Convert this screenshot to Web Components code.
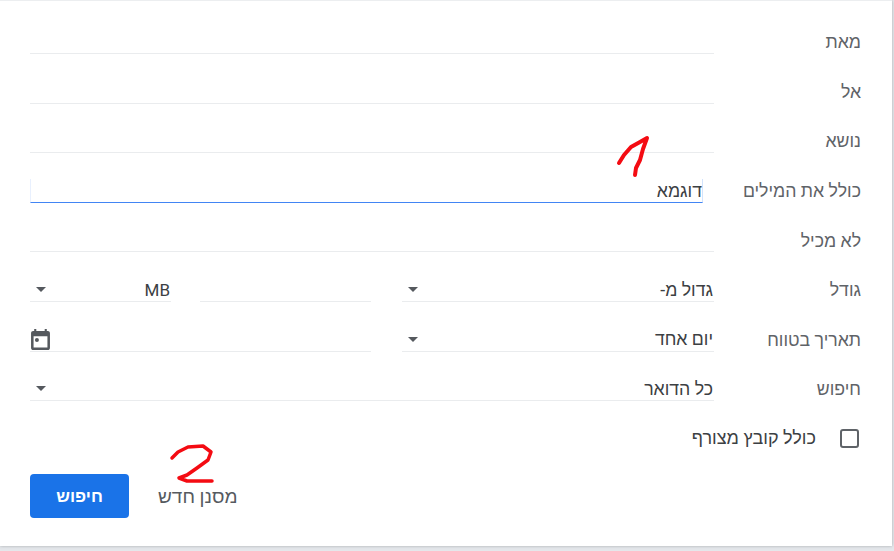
<!DOCTYPE html>
<html lang="he" dir="rtl">
<head>
<meta charset="utf-8">
<title>חיפוש</title>
<style>
    html, body { margin: 0; padding: 0; height: 100%; overflow: hidden; }
    body {
        background: #e4e7eb;
        font-family: Roboto, "Liberation Sans", Arial, sans-serif;
        color: #3c4043;
    }
</style>
</head>
<body>
<search-panel>
    <filter-row label="מאת"><text-line></text-line></filter-row>
    <filter-row label="אל"><text-line></text-line></filter-row>
    <filter-row label="נושא"><text-line></text-line></filter-row>
    <filter-row label="כולל את המילים"><text-line focused value="דוגמא"></text-line></filter-row>
    <filter-row label="לא מכיל"><text-line></text-line></filter-row>
    <filter-row label="גודל">
        <select-line style="flex:none;width:312px" value="גדול מ-"></select-line>
        <text-line style="flex:none;width:171px"></text-line>
        <select-line style="flex:none;width:141px;margin-right:-2px;font-size:17px" value="MB"></select-line>
    </filter-row>
    <filter-row label="תאריך בטווח">
        <select-line style="flex:none;width:312px" value="יום אחד"></select-line>
        <text-line style="flex:none;width:341px" calendar></text-line>
    </filter-row>
    <filter-row label="חיפוש"><select-line value="כל הדואר"></select-line></filter-row>
    <check-row>כולל קובץ מצורף</check-row>
    <action-bar></action-bar>
    <red-scribbles></red-scribbles>
</search-panel>

<script>
class SearchPanel extends HTMLElement {
    constructor() {
        super();
        this.attachShadow({mode: 'open'}).innerHTML = `
        <style>
            :host {
                display: block;
                position: relative;
                box-sizing: border-box;
                width: 892px;
                height: 546px;
                margin-right: 2px;
                padding: 3.5px 31px 0 30px;
                background: #fff;
                border-top: 1px solid #eceef0;
                box-shadow: 0 0 3px rgba(60,64,67,.35);
            }
        </style>
        <slot></slot>`;
    }
}

class FilterRow extends HTMLElement {
    constructor() {
        super();
        this.attachShadow({mode: 'open'}).innerHTML = `
        <style>
            :host {
                display: flex;
                height: 49.6px;
                align-items: flex-end;
            }
            .label {
                flex: 0 0 147px;
                align-self: center;
                margin-top: 26px;
                font-size: 17.7px;
                line-height: 20px;
                color: #5f6368;
                white-space: nowrap;
            }
            .fields {
                flex: 1;
                height: 100%;
                display: flex;
                gap: 31px;
                align-items: flex-end;
            }
        </style>
        <div class="label"></div>
        <div class="fields"><slot></slot></div>`;
        this.shadowRoot.querySelector('.label').textContent = this.getAttribute('label');
    }
}

class TextLine extends HTMLElement {
    constructor() {
        super();
        const icon = this.hasAttribute('calendar') ? `
            <svg viewBox="3 2 18 20" width="19" height="21">
                <path fill="#55595e" d="M19 4h-1V2h-2v2H8V2H6v2H5c-1.1 0-2 .9-2 2v14c0 1.1.9 2 2 2h14c1.1 0 2-.9 2-2V6c0-1.1-.9-2-2-2zm-.4 15.6H5.4V9h13.2v10.6z"/>
                <circle fill="#55595e" cx="8.6" cy="12.4" r="1.9"/>
            </svg>` : '';
        this.attachShadow({mode: 'open'}).innerHTML = `
        <style>
            :host {
                display: flex;
                flex: 1;
                box-sizing: border-box;
                height: 24px;
                align-items: flex-end;
                border-bottom: 1px solid #eaecee;
                font-size: 17.7px;
                color: #3c4043;
            }
            :host([focused]) {
                margin-right: 11px;
                border-bottom-color: #4285f4;
                border-left: 1px solid #e8f0fe;
                border-right: 1px solid #d2e3fc;
            }
            :host([calendar]) { justify-content: space-between; height: 28px; }
            span { line-height: 22px; }
            svg { display: block; margin-left: 1px; margin-bottom: 1px; }
        </style>
        <span></span>${icon}`;
        this.shadowRoot.querySelector('span').textContent = this.getAttribute('value') || '';
    }
}

class SelectLine extends HTMLElement {
    constructor() {
        super();
        this.attachShadow({mode: 'open'}).innerHTML = `
        <style>
            :host {
                display: flex;
                flex: 1;
                box-sizing: border-box;
                height: 24px;
                justify-content: space-between;
                align-items: center;
                padding: 0 1px 0 6px;
                border-bottom: 1px solid #eaecee;
                font-size: 17.7px;
                color: #3c4043;
            }
            span { line-height: 22px; white-space: nowrap; }
            i {
                width: 0;
                height: 0;
                border: 5px solid transparent;
                border-bottom: 0;
                border-top-color: #55595e;
            }
        </style>
        <span dir="auto"></span><i></i>`;
        this.shadowRoot.querySelector('span').textContent = this.getAttribute('value') || '';
    }
}

class CheckRow extends HTMLElement {
    constructor() {
        super();
        this.attachShadow({mode: 'open'}).innerHTML = `
        <style>
            :host {
                display: flex;
                align-items: center;
                gap: 24px;
                height: 20px;
                margin-top: 27px;
                padding-right: 2px;
                font-size: 18px;
                color: #3c4043;
            }
            .box {
                box-sizing: border-box;
                width: 19px;
                height: 19px;
                border: 2px solid #5f6368;
                border-radius: 3px;
            }
        </style>
        <div class="box"></div><div><slot></slot></div>`;
    }
}

class ActionBar extends HTMLElement {
    constructor() {
        super();
        this.attachShadow({mode: 'open'}).innerHTML = `
        <style>
            :host {
                display: flex;
                flex-direction: row-reverse;
                justify-content: flex-end;
                direction: ltr;
                align-items: center;
                gap: 29px;
                margin-top: 26px;
            }
            .search {
                width: 99px;
                height: 44px;
                display: flex;
                align-items: center;
                justify-content: center;
                background: #1a73e8;
                color: #fff;
                border-radius: 4px;
                font-size: 17px;
                font-weight: 700;
            }
            .clear {
                font-size: 19px;
                color: #565a5f;
                direction: rtl;
            }
        </style>
        <div class="clear">מסנן חדש</div>
        <div class="search">חיפוש</div>`;
    }
}

class RedScribbles extends HTMLElement {
    constructor() {
        super();
        this.attachShadow({mode: 'open'}).innerHTML = `
        <style>
            :host { position: absolute; left: 0; top: -1px; width: 892px; height: 546px; pointer-events: none; }
            path { fill: none; stroke: #f40b12; stroke-linecap: round; stroke-linejoin: round; }
        </style>
        <svg width="892" height="546">
            <path stroke-width="4" d="M619 163 L624 155 L631 147 L640 142 L647 138 L643 149 L640 160 L636 168 L635 175"/>
            <path stroke-width="3.5" d="M172 458 L178 452 L188 447 L203 446 L211 452 L208 460 L197 468 L187 475 L179 478 L187 481 L212 481"/>
        </svg>`;
    }
}

customElements.define('search-panel', SearchPanel);
customElements.define('filter-row', FilterRow);
customElements.define('text-line', TextLine);
customElements.define('select-line', SelectLine);
customElements.define('check-row', CheckRow);
customElements.define('action-bar', ActionBar);
customElements.define('red-scribbles', RedScribbles);
</script>
</body>
</html>
